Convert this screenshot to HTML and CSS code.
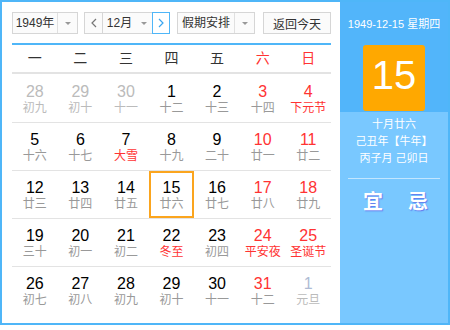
FILE: index.html
```html
<!DOCTYPE html>
<html lang="zh-CN">
<head>
  <meta charset="UTF-8" />
  <title>万年历</title>
  <link rel="stylesheet" href="styles.css">
</head>
<body>
  <div class="calendar">
    <div class="main">
      <div class="toolbar">
        <div class="select year">
          <span class="select-text">1949年</span>
          <span class="select-arrow"></span>
        </div>
        <div class="month-group">
          <button class="nav prev">
            <svg width="6" height="10" viewBox="0 0 6 10"><polyline points="5,1 1,5 5,9" fill="none" stroke="#777" stroke-width="1.2"/></svg>
          </button>
          <div class="select month">
            <span class="select-text">12月</span>
            <span class="select-arrow"></span>
          </div>
          <button class="nav next">
            <svg width="6" height="10" viewBox="0 0 6 10"><polyline points="1,1 5,5 1,9" fill="none" stroke="#3aa6f0" stroke-width="1.2"/></svg>
          </button>
        </div>
        <div class="select holiday">
          <span class="select-text">假期安排</span>
          <span class="select-arrow"></span>
        </div>
        <button class="today-btn">返回今天</button>
      </div>

      <div class="weekdays">
        <span>一</span><span>二</span><span>三</span><span>四</span><span>五</span>
        <span class="weekend">六</span><span class="weekend">日</span>
      </div>

      <div class="days">
        <div class="day other"><span class="num">28</span><span class="lunar">初九</span></div>
        <div class="day other"><span class="num">29</span><span class="lunar">初十</span></div>
        <div class="day other"><span class="num">30</span><span class="lunar">十一</span></div>
        <div class="day"><span class="num">1</span><span class="lunar">十二</span></div>
        <div class="day"><span class="num">2</span><span class="lunar">十三</span></div>
        <div class="day weekend"><span class="num">3</span><span class="lunar">十四</span></div>
        <div class="day weekend festival"><span class="num">4</span><span class="lunar">下元节</span></div>

        <div class="day"><span class="num">5</span><span class="lunar">十六</span></div>
        <div class="day"><span class="num">6</span><span class="lunar">十七</span></div>
        <div class="day festival"><span class="num">7</span><span class="lunar">大雪</span></div>
        <div class="day"><span class="num">8</span><span class="lunar">十九</span></div>
        <div class="day"><span class="num">9</span><span class="lunar">二十</span></div>
        <div class="day weekend"><span class="num">10</span><span class="lunar">廿一</span></div>
        <div class="day weekend"><span class="num">11</span><span class="lunar">廿二</span></div>

        <div class="day"><span class="num">12</span><span class="lunar">廿三</span></div>
        <div class="day"><span class="num">13</span><span class="lunar">廿四</span></div>
        <div class="day"><span class="num">14</span><span class="lunar">廿五</span></div>
        <div class="day selected"><span class="num">15</span><span class="lunar">廿六</span></div>
        <div class="day"><span class="num">16</span><span class="lunar">廿七</span></div>
        <div class="day weekend"><span class="num">17</span><span class="lunar">廿八</span></div>
        <div class="day weekend"><span class="num">18</span><span class="lunar">廿九</span></div>

        <div class="day"><span class="num">19</span><span class="lunar">三十</span></div>
        <div class="day"><span class="num">20</span><span class="lunar">初一</span></div>
        <div class="day"><span class="num">21</span><span class="lunar">初二</span></div>
        <div class="day festival"><span class="num">22</span><span class="lunar">冬至</span></div>
        <div class="day"><span class="num">23</span><span class="lunar">初四</span></div>
        <div class="day weekend festival"><span class="num">24</span><span class="lunar">平安夜</span></div>
        <div class="day weekend festival"><span class="num">25</span><span class="lunar">圣诞节</span></div>

        <div class="day"><span class="num">26</span><span class="lunar">初七</span></div>
        <div class="day"><span class="num">27</span><span class="lunar">初八</span></div>
        <div class="day"><span class="num">28</span><span class="lunar">初九</span></div>
        <div class="day"><span class="num">29</span><span class="lunar">初十</span></div>
        <div class="day"><span class="num">30</span><span class="lunar">十一</span></div>
        <div class="day weekend"><span class="num">31</span><span class="lunar">十二</span></div>
        <div class="day next-month"><span class="num">1</span><span class="lunar">元旦</span></div>
      </div>
    </div>

    <div class="side">
      <div class="side-top">
        <p class="side-date">1949-12-15 星期四</p>
        <div class="big-day">15</div>
      </div>
      <div class="side-bottom">
        <p>十月廿六</p>
        <p>己丑年【牛年】</p>
        <p>丙子月 己卯日</p>
        <div class="side-line"></div>
        <div class="yiji">
          <span>宜</span>
          <span>忌</span>
        </div>
      </div>
    </div>
  </div>
</body>
</html>
```

FILE: styles.css
```css
* {
  margin: 0;
  padding: 0;
  box-sizing: border-box;
  font-family: "Liberation Sans", "Noto Sans CJK SC", sans-serif;
}

body {
  background: #fff;
}

.calendar {
  display: flex;
  width: 450px;
  height: 325px;
  border: 2px solid #4fb6f8;
}

/* left part */
.main {
  width: 338px;
  padding: 10px 9px 0 10px;
  background: #fff;
}

.toolbar {
  display: flex;
  height: 22px;
  margin-bottom: 9px;
  font-size: 12px;
  color: #333;
}

.select {
  display: flex;
  height: 22px;
  border: 1px solid #d6d6d6;
  background: #fbfbfb;
}

.select-text {
  flex: 1;
  text-align: center;
  line-height: 20px;
}

.select-arrow {
  width: 20px;
  border-left: 1px solid #e0e0e0;
  position: relative;
}

.select-arrow::after {
  content: "";
  position: absolute;
  left: 7px;
  top: 9px;
  border-left: 3px solid transparent;
  border-right: 3px solid transparent;
  border-top: 3px solid #999;
}

.year {
  width: 66px;
  margin-right: 6px;
}

.month-group {
  display: flex;
  width: 86px;
  margin-right: 7px;
}

.nav {
  display: flex;
  justify-content: center;
  align-items: center;
  height: 22px;
  border: 1px solid #d6d6d6;
  background: #fbfbfb;
  cursor: pointer;
}

.prev {
  width: 19px;
}

.next {
  width: 18px;
  border-color: #4fb6f8;
  background: #fff;
}

.month {
  width: 49px;
  border-left: none;
  border-right: none;
}

.month .select-arrow {
  border-left: none;
  width: 16px;
}

.month .select-arrow::after {
  left: 5px;
}

.holiday {
  width: 78px;
  margin-right: 8px;
}

.today-btn {
  width: 68px;
  height: 22px;
  border: 1px solid #d6d6d6;
  background: #fbfbfb;
  font-size: 12px;
  color: #333;
  cursor: pointer;
}

.weekdays {
  display: grid;
  grid-template-columns: repeat(7, 1fr);
  height: 31px;
  border-top: 2px solid #4fb6f8;
  border-bottom: 2px solid #e3e3e3;
  font-size: 14px;
  line-height: 27px;
  text-align: center;
  color: #333;
}

.weekdays .weekend {
  color: #f33;
}

.days {
  display: grid;
  grid-template-columns: repeat(7, 1fr);
  grid-auto-rows: 48px;
}

.day {
  display: flex;
  flex-direction: column;
  align-items: center;
  padding-top: 9px;
}

.day:nth-child(n+8) {
  border-top: 1px solid #e3e3e3;
  padding-top: 8px;
}

.num {
  font-size: 16px;
  line-height: 18px;
  color: #000;
}

.lunar {
  font-size: 12px;
  line-height: 14px;
  color: #999;
}

.day.weekend .num {
  color: #f33;
}

.day.festival .lunar {
  color: #f33;
}

.day.other .num,
.day.other .lunar,
.day.next-month .lunar {
  color: #bbb;
}

.day.next-month .num {
  color: #aebbd4;
}

.day.selected {
  box-shadow: inset 0 0 0 2px #fba51e;
}

/* right part */
.side {
  width: 108px;
  display: flex;
  flex-direction: column;
  color: #fff;
}

.side-top {
  background: #52b5fa;
  padding: 14px 0 1px;
  display: flex;
  flex-direction: column;
  align-items: center;
}

.side-date {
  font-size: 11px;
  line-height: 16px;
  margin-bottom: 13px;
}

.big-day {
  width: 62px;
  height: 66px;
  background: #ffa800;
  border-radius: 3px;
  font-size: 40px;
  line-height: 60px;
  text-align: center;
}

.side-bottom {
  flex: 1;
  background: #79c8ff;
  padding-top: 4px;
  text-align: center;
}

.side-bottom p {
  font-size: 11px;
  line-height: 17px;
}

.side-line {
  height: 1px;
  margin: 11px 8px 0;
  background: rgba(255, 255, 255, 0.55);
}

.yiji {
  display: flex;
  justify-content: center;
  gap: 25px;
  padding-left: 3px;
  margin-top: 11px;
  font-size: 20px;
  line-height: 24px;
  font-weight: bold;
}

.yiji span {
  text-shadow: 1px 1px 1px rgba(90, 90, 230, 0.7);
}
```
